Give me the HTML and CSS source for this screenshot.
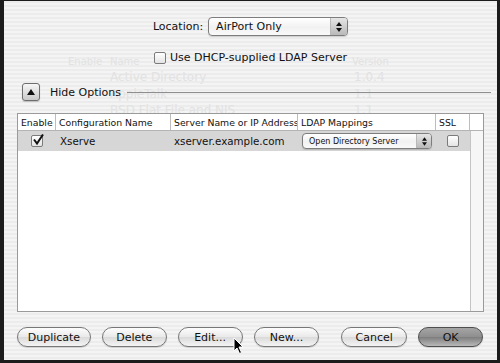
FILE: index.html
```html
<!DOCTYPE html>
<html lang="en">
<head>
    <meta charset="UTF-8">
    <title>LDAP Options</title>
    <link rel="stylesheet" href="styles.css">
</head>
<body>
    <div class="window">
        <div class="ghost">
            <span class="g-enable">Enable</span><span class="g-name">Name</span><span class="g-version">Version</span>
            <span class="g-r1">Active Directory</span><span class="g-v1">1.0.4</span>
            <span class="g-r2">AppleTalk</span><span class="g-v2">1.1</span>
            <span class="g-r3">BSD Flat File and NIS</span><span class="g-v3">1.1</span>
        </div>

        <div class="location-row">
            <span class="label">Location:</span>
            <div class="popup">
                <span class="popup-text">AirPort Only</span>
                <span class="popup-arrows"><svg width="6" height="10" viewBox="0 0 6 10"><path d="M0 4 L3 0 L6 4 Z M0 6 L3 10 L6 6 Z" fill="#111"/></svg></span>
            </div>
        </div>

        <div class="dhcp-row">
            <span class="checkbox"></span>
            <span>Use DHCP-supplied LDAP Server</span>
        </div>

        <div class="options-row">
            <span class="disclosure"><svg width="8" height="6" viewBox="0 0 8 6"><path d="M0 6 L4 0 L8 6 Z" fill="#111"/></svg></span>
            <span class="options-label">Hide Options</span>
            <span class="rule"></span>
        </div>

        <div class="table">
            <div class="row head">
                <div class="c c-enable">Enable</div>
                <div class="c c-name">Configuration Name</div>
                <div class="c c-server">Server Name or IP Address</div>
                <div class="c c-map">LDAP Mappings</div>
                <div class="c c-ssl">SSL</div>
                <div class="c c-end"></div>
            </div>
            <div class="row sel">
                <div class="c c-enable center">
                    <span class="checkbox checked"><svg width="12" height="12" viewBox="0 0 12 12"><path d="M2 5.5 L5 9.5 L11 0.5" stroke="#111" stroke-width="2" fill="none"/></svg></span>
                </div>
                <div class="c c-name big">Xserve</div>
                <div class="c c-server big">xserver.example.com</div>
                <div class="c c-map">
                    <div class="popup small">
                        <span class="popup-text">Open Directory Server</span>
                        <span class="popup-arrows"><svg width="5" height="9" viewBox="0 0 6 10"><path d="M0 4 L3 0 L6 4 Z M0 6 L3 10 L6 6 Z" fill="#111"/></svg></span>
                    </div>
                </div>
                <div class="c c-ssl center"><span class="checkbox"></span></div>
                <div class="c c-end"></div>
            </div>
            <div class="row empty">
                <div class="c c-body"></div>
                <div class="c c-end"></div>
            </div>
        </div>

        <div class="buttons">
            <button class="btn w74">Duplicate</button>
            <button class="btn w65">Delete</button>
            <button class="btn w65">Edit...</button>
            <button class="btn w66">New...</button>
            <span class="spacer"></span>
            <button class="btn w66">Cancel</button>
            <button class="btn w65 default">OK</button>
        </div>

        <svg class="cursor" width="12" height="18" viewBox="0 0 12 18">
            <path d="M1 1 L1 14 L4 11 L6.5 16.5 L8.5 15.5 L6 10 L10 10 Z" fill="#000" stroke="#fff" stroke-width="1"/>
        </svg>
    </div>
</body>
</html>
```

FILE: styles.css
```css
body {
    margin: 0;
    font-family: "DejaVu Sans", sans-serif;
    color: #111;
}

.window {
    position: relative;
    width: 500px;
    height: 363px;
    box-sizing: border-box;
    border-style: solid;
    border-color: #1c1c1c;
    border-width: 1px 3px 3px 4px;
    background: repeating-linear-gradient(#ececec 0 2px, #f4f4f4 2px 4px);
    display: flex;
    flex-direction: column;
    overflow: hidden;
}

/* faint text from the sheet behind */
.ghost {
    position: absolute;
    left: 0;
    top: 0;
    width: 100%;
    height: 120px;
    font-size: 12px;
    color: #e2e2e2;
}

.ghost span {
    position: absolute;
}

.g-enable { left: 64px; top: 55px; font-size: 10px; }
.g-name { left: 106px; top: 55px; font-size: 10px; }
.g-version { left: 348px; top: 55px; font-size: 10px; }
.g-r1 { left: 106px; top: 69px; }
.g-v1 { left: 350px; top: 69px; }
.g-r2 { left: 106px; top: 86px; }
.g-v2 { left: 350px; top: 86px; }
.g-r3 { left: 106px; top: 102px; }
.g-v3 { left: 350px; top: 102px; }

.location-row {
    position: relative;
    display: flex;
    justify-content: center;
    align-items: center;
    gap: 5px;
    margin-top: 16px;
    font-size: 11px;
}

.popup {
    display: flex;
    align-items: center;
    width: 140px;
    height: 19px;
    box-sizing: border-box;
    border: 1px solid #7d7d7d;
    border-radius: 4px;
    background: linear-gradient(#ffffff, #f1f1f1 55%, #fafafa);
    box-shadow: 0 1px 1px rgba(0, 0, 0, 0.15);
    overflow: hidden;
}

.popup-text {
    flex: 1;
    padding-left: 7px;
    white-space: nowrap;
}

.popup-arrows {
    width: 17px;
    height: 100%;
    border-left: 1px solid #b8b8b8;
    background: linear-gradient(#e6e6e6, #b9b9b9);
    display: flex;
    align-items: center;
    justify-content: center;
    box-sizing: border-box;
}

.dhcp-row {
    position: relative;
    display: flex;
    justify-content: center;
    align-items: center;
    gap: 4px;
    margin-top: 15px;
    font-size: 11px;
}

.checkbox {
    display: inline-block;
    width: 12px;
    height: 12px;
    box-sizing: border-box;
    border: 1px solid #7b7b7b;
    border-radius: 2px;
    background: linear-gradient(#ffffff, #e4e4e4);
    position: relative;
}

.checkbox svg {
    position: absolute;
    left: 0;
    top: -2px;
}

.options-row {
    position: relative;
    display: flex;
    align-items: center;
    margin-top: 19px;
    padding: 0 6px 0 18px;
    font-size: 11px;
}

.disclosure {
    width: 18px;
    height: 18px;
    box-sizing: border-box;
    border: 1px solid #6e6e6e;
    border-radius: 3px;
    background: linear-gradient(#f6f6f6, #c9c9c9);
    display: flex;
    align-items: center;
    justify-content: center;
    box-shadow: 0 1px 1px rgba(0, 0, 0, 0.2);
}

.options-label {
    margin-left: 10px;
}

.rule {
    flex: 1;
    height: 1px;
    background: #8e8e8e;
    margin-left: 6px;
}

.table {
    position: relative;
    margin: 12px 13px 0 13px;
    height: 197px;
    border: 1px solid #9a9a9a;
    background: #fff;
    display: flex;
    flex-direction: column;
    font-size: 9.3px;
}

.row {
    display: flex;
}

.c {
    box-sizing: border-box;
    display: flex;
    align-items: center;
    white-space: nowrap;
    overflow: hidden;
}

.head {
    height: 16px;
    border-bottom: 1px solid #b4b4b4;
}

.head .c {
    border-right: 1px solid #bdbdbd;
    padding-left: 3px;
}

.c-enable { width: 38px; }
.c-name { width: 115px; }
.c-server { width: 127px; }
.c-map { width: 138px; }
.c-ssl { width: 34px; }
.c-end { flex: 1; }
.c-body { width: 452px; }

.head .c-end {
    border-right: none;
}

.sel {
    height: 20px;
    background: #d6d6d6;
}

.sel .c-end,
.empty .c-end {
    background: #f6f6f6;
    border-left: 1px solid #c4c4c4;
}

.center {
    justify-content: center;
}

.big {
    font-size: 10.3px;
    padding-left: 4px;
}

.sel .c-server {
    padding-left: 3px;
}

.sel .c-map {
    padding-left: 4px;
}

.popup.small {
    width: 130px;
    height: 16px;
    font-size: 8px;
}

.popup.small .popup-text {
    padding-left: 6px;
}

.popup.small .popup-arrows {
    width: 15px;
}

.empty {
    flex: 1;
}

.buttons {
    display: flex;
    align-items: center;
    gap: 11px;
    margin: 15px 14px 0 13px;
}

.spacer {
    flex: 1;
}

.btn {
    height: 20px;
    padding: 0;
    font-family: "DejaVu Sans", sans-serif;
    font-size: 11px;
    color: #111;
    border: 1px solid #777;
    border-radius: 10px;
    background: linear-gradient(#fdfdfd, #e9e9e9 50%, #dadada 51%, #f4f4f4);
    box-shadow: 0 1px 1px rgba(0, 0, 0, 0.15);
}

.btn.default {
    background: linear-gradient(#a5a5a5, #8e8e8e 50%, #7e7e7e 51%, #b8b8b8);
    border-color: #4e4e4e;
}

.w74 { width: 74px; }
.w65 { width: 65px; }
.w66 { width: 66px; }

.cursor {
    position: absolute;
    left: 229px;
    top: 336px;
}
```
